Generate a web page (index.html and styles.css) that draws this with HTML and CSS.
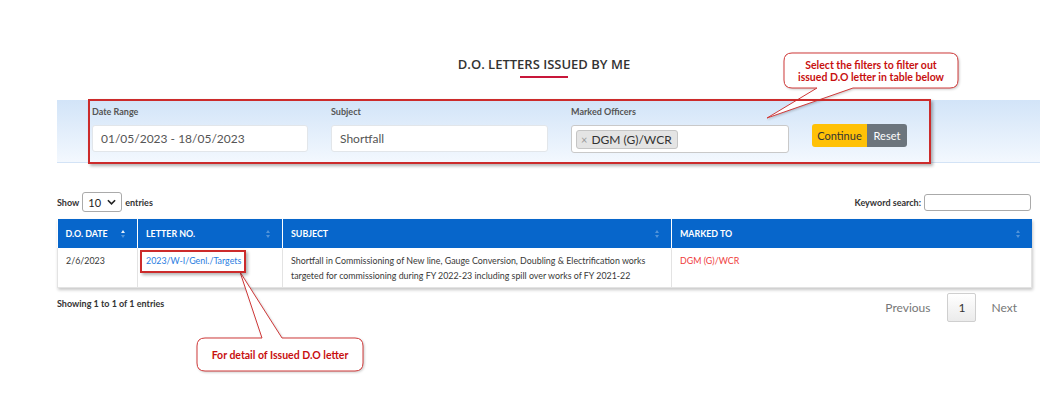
FILE: index.html
```html
<!DOCTYPE html>
<html lang="en">
<head>
<meta charset="utf-8">
<title>D.O. Letters Issued By Me</title>
<link rel="stylesheet" href="styles.css">
</head>
<body>
<div class="page">
  <h1 class="title">D.O. LETTERS ISSUED BY ME</h1>
  <div class="title-rule"></div>

  <section class="filters">
    <div class="field">
      <div class="field-label">Date Range</div>
      <div class="input">01/05/2023 - 18/05/2023</div>
    </div>
    <div class="field">
      <div class="field-label">Subject</div>
      <div class="input">Shortfall</div>
    </div>
    <div class="field">
      <div class="field-label">Marked Officers</div>
      <div class="input input-multi"><span class="tag"><span class="tag-x">×</span>DGM (G)/WCR</span></div>
    </div>
    <div class="actions">
      <button class="btn btn-continue">Continue</button><button class="btn btn-reset">Reset</button>
    </div>
  </section>

  <div class="toolbar">
    <div class="length">Show <span class="select">10<svg class="chev" viewBox="0 0 10 6" width="9" height="6"><path d="M1 1 L5 5 L9 1" fill="none" stroke="#222" stroke-width="1.8"/></svg></span> entries</div>
    <div class="search">Keyword search: <span class="search-input"></span></div>
  </div>

  <table class="grid">
    <colgroup>
      <col class="c1"><col class="c2"><col class="c3"><col class="c4">
    </colgroup>
    <thead>
      <tr>
        <th>D.O. DATE<span class="sort sort-asc"><i class="up"></i><i class="down"></i></span></th>
        <th>LETTER NO.<span class="sort"><i class="up"></i><i class="down"></i></span></th>
        <th>SUBJECT<span class="sort"><i class="up"></i><i class="down"></i></span></th>
        <th>MARKED TO<span class="sort"><i class="up"></i><i class="down"></i></span></th>
      </tr>
    </thead>
    <tbody>
      <tr>
        <td>2/6/2023</td>
        <td><a class="letter-link" href="#">2023/W-I/Genl./Targets</a></td>
        <td>Shortfall in Commissioning of New line, Gauge Conversion, Doubling &amp; Electrification works targeted for commissioning during FY 2022-23 including spill over works of FY 2021-22</td>
        <td class="marked">DGM (G)/WCR</td>
      </tr>
    </tbody>
  </table>

  <div class="footer">
    <div class="info">Showing 1 to 1 of 1 entries</div>
    <div class="paging">
      <span class="pg pg-prev">Previous</span>
      <span class="pg pg-current">1</span>
      <span class="pg pg-next">Next</span>
    </div>
  </div>
</div>

<!-- annotation overlay -->
<svg class="callouts" viewBox="0 0 1060 411" width="1060" height="411">
  <path d="M 792 53 H 950 Q 958 53 958 61 V 80 Q 958 88 950 88 H 853 L 767 118 L 817 88 H 792 Q 784 88 784 80 V 61 Q 784 53 792 53 Z" fill="#fff" stroke="#d03a3a" stroke-width="1"/>
  <path d="M 205 338 H 262 L 240 272 L 282 338 H 355 Q 363 338 363 346 V 363 Q 363 371 355 371 H 205 Q 197 371 197 363 V 346 Q 197 338 205 338 Z" fill="#fff" stroke="#d03a3a" stroke-width="1"/>
</svg>
<div class="mark mark-filters"></div>
<div class="mark mark-link"></div>
<div class="callout-text callout-1">Select the filters to filter out<br>issued D.O letter in table below</div>
<div class="callout-text callout-2">For detail of Issued D.O letter</div>
</body>
</html>
```

FILE: styles.css
```css
* { box-sizing: border-box; }

html, body {
  margin: 0;
  padding: 0;
  background: #fff;
}

body {
  position: relative;
  width: 1060px;
  height: 411px;
  overflow: hidden;
  font-family: Lato, "Open Sans", sans-serif;
  color: #333;
}

.page {
  width: 974px;
  margin-left: 57px;
  padding-top: 55px;
}

.title {
  margin: 0;
  font-family: "Open Sans", Lato, sans-serif;
  font-weight: 600;
  font-size: 13px;
  line-height: 18px;
  text-align: center;
  color: #333;
}

.title-rule {
  width: 48px;
  height: 2px;
  margin: 3px auto 0;
  background: #c8173a;
}

/* ---------- filter band ---------- */
.filters {
  margin-top: 22px;
  width: 983px;
  height: 63px;
  padding: 6px 0 0 35px;
  display: grid;
  grid-template-columns: 216px 217px 218px auto;
  column-gap: 23px;
  align-items: start;
  background: linear-gradient(#d2e4f8, #f3f8fe);
  border-bottom: 1px solid #d3e3f6;
}

.field-label {
  font-size: 9px;
  line-height: 11px;
  font-weight: 700;
  color: #555;
  margin-bottom: 8px;
}

.input {
  height: 27px;
  display: flex;
  align-items: center;
  padding: 0 8px;
  background: #fff;
  border: 1px solid #e2e6ea;
  border-radius: 3px;
  font-size: 12px;
  color: #555;
}

.input-multi {
  height: 28px;
  padding: 0 4px;
  border-color: #c9c9c9;
}

.tag {
  display: inline-flex;
  align-items: center;
  height: 19px;
  padding: 0 5px 0 4px;
  background: #e4e4e4;
  border: 1px solid #c5c5c5;
  border-radius: 3px;
  font-size: 12px;
  color: #333;
}

.tag-x {
  font-size: 11px;
  color: #999;
  margin-right: 4px;
}

.actions {
  display: flex;
  padding-top: 18px;
}

.btn {
  height: 23px;
  border: 0;
  margin: 0;
  padding: 0;
  font-family: Lato, sans-serif;
  font-size: 11px;
  cursor: pointer;
}

.btn-continue {
  width: 55px;
  background: #ffc107;
  color: #333;
  border-radius: 3px 0 0 3px;
}

.btn-reset {
  width: 40px;
  background: #6c757d;
  color: #fff;
  border-radius: 0 3px 3px 0;
}

/* ---------- toolbar ---------- */
.toolbar {
  margin-top: 29px;
  height: 20px;
  display: flex;
  justify-content: space-between;
  align-items: center;
  font-size: 9px;
  font-weight: 700;
  color: #333;
}

.length, .search {
  display: flex;
  align-items: center;
}

.select {
  width: 40px;
  height: 20px;
  margin: 0 3px;
  padding: 0 5px;
  display: inline-flex;
  align-items: center;
  justify-content: space-between;
  border: 1px solid #aaa;
  border-radius: 3px;
  font-size: 11px;
  font-weight: 400;
  color: #222;
}

.search-input {
  width: 107px;
  height: 17px;
  margin-left: 3px;
  border: 1px solid #aaa;
  border-radius: 3px;
  background: #fff;
}

/* ---------- table ---------- */
.grid {
  margin-top: 7px;
  width: 974px;
  border-collapse: collapse;
  table-layout: fixed;
  font-size: 8.85px;
  box-shadow: 1px 2px 3px rgba(0, 0, 0, 0.22);
}

.c1 { width: 80px; }
.c2 { width: 145px; }
.c3 { width: 389px; }
.c4 { width: 360px; }

.grid th {
  position: relative;
  height: 29px;
  padding: 0 8px;
  background: #0766cb;
  color: #fff;
  font-weight: 700;
  text-align: left;
  vertical-align: middle;
  border-right: 1px solid rgba(255, 255, 255, 0.55);
}

.grid th:last-child { border-right: 0; }

.sort {
  position: absolute;
  right: 12px;
  top: 11px;
  display: flex;
  flex-direction: column;
  gap: 2px;
}

.sort i {
  display: block;
  width: 0;
  height: 0;
  border-left: 2px solid transparent;
  border-right: 2px solid transparent;
  opacity: 0.3;
}

.sort .up { border-bottom: 3px solid #fff; }
.sort .down { border-top: 3px solid #fff; }
.sort-asc .up { opacity: 0.9; }

.grid td {
  padding: 5px 8px 4px;
  line-height: 15px;
  vertical-align: top;
  color: #383838;
  background: #fff;
  border-right: 1px solid #e3e3e3;
  border-bottom: 1px solid #e3e3e3;
}

.grid td:first-child { border-left: 1px solid #e3e3e3; }

.letter-link {
  color: #2a7de1;
  text-decoration: none;
}

.grid td.marked { color: #ef3b3b; }

/* ---------- footer ---------- */
.footer {
  margin-top: 6px;
  display: flex;
  justify-content: space-between;
  align-items: flex-start;
}

.info {
  padding-top: 4px;
  font-size: 9px;
  line-height: 11px;
  font-weight: 700;
  color: #333;
}

.paging {
  display: flex;
  align-items: center;
  font-size: 12px;
  color: #777;
  margin-right: 2px;
  margin-top: -1px;
}

.pg {
  display: inline-flex;
  align-items: center;
  justify-content: center;
  height: 29px;
  padding: 0 12px;
}

.pg-prev { padding-right: 17px; }

.pg-next { padding-left: 15px; }

.pg-current {
  width: 29px;
  padding: 0;
  color: #333;
  border: 1px solid #cfcfcf;
  border-radius: 2px;
  background: linear-gradient(#ffffff, #ebebeb);
}

/* ---------- annotation overlay ---------- */
.callouts {
  position: absolute;
  left: 0;
  top: 0;
  pointer-events: none;
  filter: drop-shadow(1px 1px 1px rgba(0, 0, 0, 0.2));
}

.mark {
  position: absolute;
  border: 2px solid #cc2b2b;
  box-shadow: 2px 2px 3px rgba(0, 0, 0, 0.3);
  pointer-events: none;
}

.mark-filters {
  left: 88px;
  top: 99px;
  width: 843px;
  height: 65px;
}

.mark-link {
  left: 140px;
  top: 250px;
  width: 106px;
  height: 23px;
}

.callout-text {
  position: absolute;
  display: flex;
  align-items: center;
  justify-content: center;
  text-align: center;
  font-family: Lato, sans-serif;
  font-weight: 700;
  font-size: 10.5px;
  line-height: 12px;
  color: #c80f0f;
}

.callout-1 {
  left: 784px;
  top: 53px;
  width: 174px;
  height: 35px;
}

.callout-2 {
  left: 197px;
  top: 338px;
  width: 166px;
  height: 33px;
}
```
